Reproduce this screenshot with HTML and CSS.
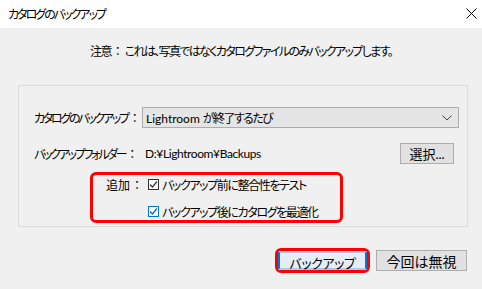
FILE: index.html
```html
<!DOCTYPE html>
<html lang="ja">
<head>
    <meta charset="UTF-8">
    <title>カタログのバックアップ</title>
    <link rel="stylesheet" href="styles.css">
</head>
<body>

    <!-- Title bar -->
    <div class="titlebar">
        <span class="title">カタログのバックアップ</span>
        <svg class="close" width="11" height="11" viewBox="0 0 11 11">
            <path d="M0.5 0.5 L10.5 10.5 M10.5 0.5 L0.5 10.5" stroke="#000" stroke-width="1" fill="none"/>
        </svg>
    </div>

    <div class="content">
        <p class="notice">注意<span class="colon">：</span>これは、写真ではなくカタログファイルのみバックアップします。</p>

        <div class="group">
            <div class="row">
                <span class="label"><span class="tight">カタログのバックアップ</span><span class="colon">：</span></span>
                <div class="select">
                    <span>Lightroom <span class="tight">が終了するたび</span></span>
                    <svg class="chevron" width="10" height="6" viewBox="0 0 10 6">
                        <path d="M0.5 0.5 L5 5 L9.5 0.5" stroke="#444" stroke-width="1" fill="none"/>
                    </svg>
                </div>
            </div>
            <div class="row">
                <span class="label"><span class="tight">バックアップフォルダー</span><span class="colon">：</span></span>
                <span class="path">D:¥Lightroom¥Backups</span>
                <button class="btn choose">選択...</button>
            </div>

            <!-- red marker round the extra options -->
            <div class="mark extras">
                <div class="check-row">
                    <span class="add-label">追加<span class="colon">：</span></span>
                    <span class="box">
                        <svg width="9" height="9" viewBox="0 0 9 9"><path d="M1 4.5 L3.5 7 L8 1.5" stroke="#333" stroke-width="1.2" fill="none"/></svg>
                    </span>
                    <span class="tight">バックアップ前に整合性をテスト</span>
                </div>
                <div class="check-row">
                    <span class="box focus">
                        <svg width="9" height="9" viewBox="0 0 9 9"><path d="M1 4.5 L3.5 7 L8 1.5" stroke="#0a64ad" stroke-width="1.2" fill="none"/></svg>
                    </span>
                    <span class="tight">バックアップ後にカタログを最適化</span>
                </div>
            </div>
        </div>

        <div class="actions">
            <span class="mark ring">
                <button class="btn primary"><span class="tight">バックアップ</span></button>
            </span>
            <button class="btn skip">今回は無視</button>
        </div>
    </div>

</body>
</html>
```

FILE: styles.css
```css
body {
    margin: 0;
    width: 482px;
    height: 289px;
    background-color: #f0f0f0;
    font-family: Lato, "Noto Sans CJK JP", sans-serif;
    font-size: 12px;
    font-feature-settings: "palt";
    color: #000;
    overflow: hidden;
    white-space: nowrap;
}
.tight {
    letter-spacing: -1.4px;
}
.colon {
    font-feature-settings: normal;
    letter-spacing: 0;
    padding: 0 1px;
}
.titlebar {
    height: 28px;
    background-color: #fff;
    display: flex;
    align-items: center;
    justify-content: space-between;
    padding: 0 5px 2px 8px;
    box-sizing: border-box;
}
.title {
    letter-spacing: -2px;
}
.content {
    display: flex;
    flex-direction: column;
}
.notice {
    margin: 16px 0 0;
    line-height: 16px;
    text-align: center;
    letter-spacing: -1.65px;
}
.notice .colon {
    letter-spacing: 0;
}
.group {
    margin: 25px 14px 0 18px;
    border: 1px solid #dcdcdc;
    padding: 21px 8px 3px 15px;
    display: flex;
    flex-direction: column;
    gap: 15px;
}
.group .mark {
    margin-top: -7px;
}
.row {
    display: flex;
    align-items: center;
    height: 21px;
}
.label {
    width: 108px;
    flex-shrink: 0;
}
.label .tight {
    letter-spacing: -2.3px;
}
.select {
    flex: 1;
    height: 21px;
    box-sizing: border-box;
    background-color: #e5e5e5;
    border: 1px solid #acacac;
    display: flex;
    align-items: center;
    justify-content: space-between;
    padding: 0 6px 0 3px;
}
.select .tight {
    letter-spacing: -1.6px;
}
.path {
    flex: 1;
    padding-left: 3px;
    letter-spacing: -0.4px;
}
.btn {
    font: inherit;
    font-feature-settings: "palt";
    color: #000;
    background-color: #e1e1e1;
    border: 1px solid #adadad;
    padding: 0;
    height: 21px;
    box-sizing: border-box;
}
.choose {
    width: 54px;
    margin-right: 5px;
    font-size: 13px;
}
.mark {
    border: 3px solid #ff0000;
    border-radius: 6px;
}
.extras {
    margin-left: 56px;
    width: 253px;
    box-sizing: border-box;
    display: flex;
    flex-direction: column;
    gap: 9px;
    padding-left: 13px;
}
.check-row {
    display: flex;
    align-items: center;
    height: 18px;
    padding-left: 42px;
}
.check-row .add-label {
    margin-left: -42px;
    width: 42px;
}
.box {
    width: 11px;
    height: 11px;
    flex-shrink: 0;
    box-sizing: border-box;
    border: 1px solid #333;
    background-color: #fff;
    display: flex;
    align-items: center;
    justify-content: center;
    margin-right: 3px;
}
.box.focus {
    border-color: #0078d7;
}
.actions {
    display: flex;
    justify-content: flex-end;
    align-items: center;
    gap: 6px;
    margin: 21px 15px 0 0;
}
.ring {
    display: flex;
}
.primary {
    width: 89px;
    height: 19px;
    border: 2px solid #0078d7;
    border-top-color: #aacbe8;
    border-bottom-color: #aacbe8;
    background-color: #e5eef6;
    font-size: 13px;
}
.primary .tight {
    letter-spacing: -0.4px;
}
.skip {
    width: 91px;
    font-size: 14px;
}
```
